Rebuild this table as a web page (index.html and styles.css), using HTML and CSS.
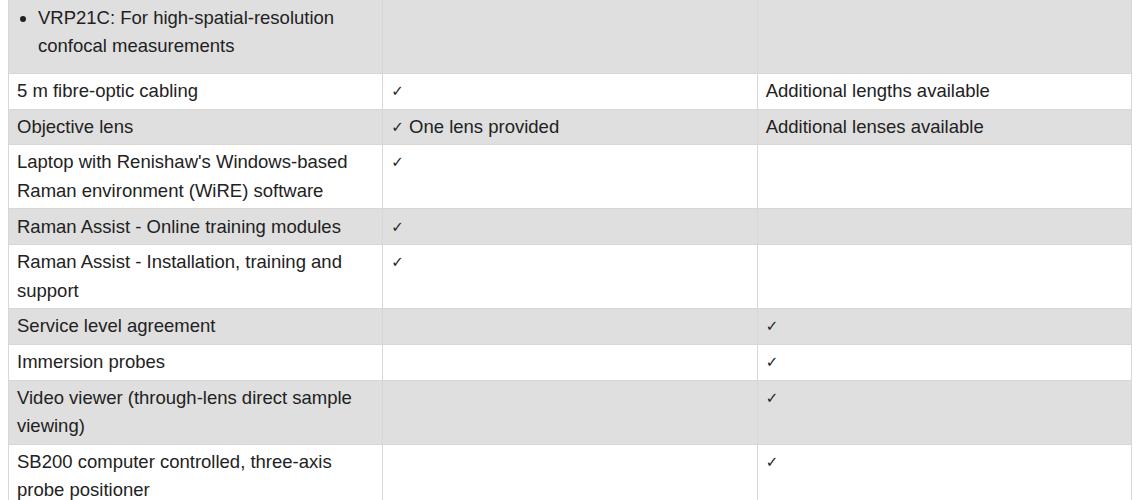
FILE: index.html
```html
<!DOCTYPE html>
<html lang="en">
<head>
<meta charset="utf-8">
<title>Raman system inclusions</title>
<link rel="stylesheet" href="styles.css">
</head>
<body>
<table class="spec">
  <colgroup><col class="c"><col class="c"><col class="c"></colgroup>
  <tbody>
    <tr class="alt first">
      <td><ul class="probes"><li>VRP21C: For high-spatial-resolution confocal measurements</li></ul></td>
      <td></td>
      <td></td>
    </tr>
    <tr>
      <td>5 m fibre-optic cabling</td>
      <td><span class="tick">✓</span></td>
      <td>Additional lengths available</td>
    </tr>
    <tr class="alt">
      <td>Objective lens</td>
      <td><span class="tick">✓</span> One lens provided</td>
      <td>Additional lenses available</td>
    </tr>
    <tr>
      <td>Laptop with Renishaw's Windows-based Raman environment (WiRE) software</td>
      <td><span class="tick">✓</span></td>
      <td></td>
    </tr>
    <tr class="alt">
      <td>Raman Assist - Online training modules</td>
      <td><span class="tick">✓</span></td>
      <td></td>
    </tr>
    <tr>
      <td>Raman Assist - Installation, training and support</td>
      <td><span class="tick">✓</span></td>
      <td></td>
    </tr>
    <tr class="alt">
      <td>Service level agreement</td>
      <td></td>
      <td><span class="tick">✓</span></td>
    </tr>
    <tr>
      <td>Immersion probes</td>
      <td></td>
      <td><span class="tick">✓</span></td>
    </tr>
    <tr class="alt">
      <td>Video viewer (through-lens direct sample viewing)</td>
      <td></td>
      <td><span class="tick">✓</span></td>
    </tr>
    <tr>
      <td>SB200 computer controlled, three-axis probe positioner</td>
      <td></td>
      <td><span class="tick">✓</span></td>
    </tr>
  </tbody>
</table>
</body>
</html>
```
FILE: styles.css
```css
html, body {
  background: #ffffff;
}
body {
  margin: 0 8px;
  font-family: "Liberation Sans", Arial, Helvetica, sans-serif;
  font-size: 18.5px;
  line-height: 28.4px;
  color: #222222;
}
.spec {
  width: 100%;
  border-collapse: collapse;
  table-layout: fixed;
}
.spec td {
  border: 1px solid #dbd6d1;
  padding: 3.15px 8px;
  vertical-align: top;
  text-align: left;
}
.spec tr.first td {
  border-top: none;
  padding-top: 4px;
}
.spec tr.alt td {
  background: #dfdfdf;
}
.probes {
  margin: 0 0 9px;
  padding-left: 21px;
  list-style: disc;
}
.tick {
  display: inline-block;
  font-family: "DejaVu Sans", sans-serif;
  font-size: 15px;
  line-height: 1;
  color: #222222;
  vertical-align: 1px;
}
```
